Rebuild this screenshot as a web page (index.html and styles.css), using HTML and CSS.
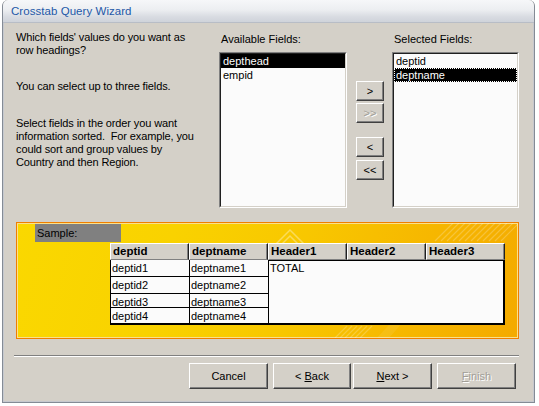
FILE: index.html
```html
<!DOCTYPE html>
<html>
<head>
<meta charset="utf-8">
<link rel="stylesheet" href="styles.css">
</head>
<body>
<div class="window">
  <div class="titlebar"><span class="title">Crosstab Query Wizard</span></div>
  <div class="content">
    <div class="top">
      <div class="intro">
        <p class="p1">Which fields' values do you want as<br>row headings?</p>
        <p class="p2">You can select up to three fields.</p>
        <p class="p3">Select fields in the order you want<br>information sorted.&nbsp; For example, you<br>could sort and group values by<br>Country and then Region.</p>
      </div>
      <div class="field-col">
        <div class="label">Available Fields:</div>
        <div class="listbox">
          <div class="list-inner">
            <div class="item sel">depthead</div>
            <div class="item">empid</div>
          </div>
        </div>
      </div>
      <div class="movers">
        <button class="btn mv">&gt;</button>
        <button class="btn mv dis mv2">&gt;&gt;</button>
        <button class="btn mv mv3">&lt;</button>
        <button class="btn mv mv4">&lt;&lt;</button>
      </div>
      <div class="field-col">
        <div class="label">Selected Fields:</div>
        <div class="listbox">
          <div class="list-inner">
            <div class="item">deptid</div>
            <div class="item sel focus">deptname</div>
          </div>
        </div>
      </div>
    </div>

    <div class="sample">
      <svg class="deco" width="501" height="115" viewBox="0 0 501 115" aria-hidden="true">
        <g fill="none" stroke="#fff" stroke-opacity="0.35" stroke-width="1.5">
          <polyline points="258,22 273,7 288,22"/>
          <polyline points="264,22 273,13 282,22"/>
        </g>
        <g stroke="#fff" stroke-opacity="0.22" stroke-width="1.2">
          <line x1="418" y1="18" x2="436" y2="0"/>
          <line x1="424" y1="18" x2="442" y2="0"/>
          <line x1="430" y1="18" x2="448" y2="0"/>
          <line x1="436" y1="18" x2="454" y2="0"/>
          <line x1="442" y1="18" x2="460" y2="0"/>
          <line x1="448" y1="18" x2="466" y2="0"/>
          <line x1="454" y1="18" x2="472" y2="0"/>
          <line x1="460" y1="18" x2="478" y2="0"/>
          <line x1="466" y1="18" x2="484" y2="0"/>
          <line x1="472" y1="18" x2="490" y2="0"/>
          <line x1="478" y1="18" x2="496" y2="0"/>
          <line x1="484" y1="18" x2="502" y2="0"/>
          <line x1="318" y1="115" x2="330" y2="103"/>
          <line x1="323" y1="115" x2="335" y2="103"/>
          <line x1="328" y1="115" x2="340" y2="103"/>
          <line x1="333" y1="115" x2="345" y2="103"/>
          <line x1="338" y1="115" x2="350" y2="103"/>
          <line x1="343" y1="115" x2="355" y2="103"/>
        </g>
        <polygon points="360,115 372,115 420,60 410,60" fill="#fff" fill-opacity="0.08"/>
      </svg>
      <div class="sample-label">Sample:</div>
      <div class="grid">
        <div class="hd">deptid</div>
        <div class="hd">deptname</div>
        <div class="hd">Header1</div>
        <div class="hd">Header2</div>
        <div class="hd">Header3</div>

        <div class="cell c1">deptid1</div>
        <div class="cell c2">deptname1</div>
        <div class="valbox">TOTAL</div>
        <div class="cell c1">deptid2</div>
        <div class="cell c2">deptname2</div>
        <div class="cell c1">deptid3</div>
        <div class="cell c2">deptname3</div>
        <div class="cell c1 last">deptid4</div>
        <div class="cell c2 last">deptname4</div>
      </div>
    </div>

    <div class="sep"></div>

    <div class="buttons">
      <button class="btn wb cancel"><span>Cancel</span></button>
      <button class="btn wb back"><span>&lt; <u>B</u>ack</span></button>
      <button class="btn wb next"><span><u>N</u>ext &gt;</span></button>
      <button class="btn wb finish dis"><span><u>F</u>inish</span></button>
    </div>
  </div>
</div>
</body>
</html>
```

FILE: styles.css
```css
* { box-sizing: border-box; }

html, body {
  margin: 0;
  padding: 0;
  background: #ffffff;
}

body {
  font-family: "Liberation Sans", Arial, sans-serif;
  font-size: 11px;
  color: #000;
}

.window {
  margin-left: 2px;
  width: 533px;
  height: 403px;
  border: 1px solid #848b95;
  border-top: none;
  border-radius: 6px 6px 0 0;
  overflow: hidden;
  display: flex;
  flex-direction: column;
  background: #d4d0c8;
}

.titlebar {
  height: 23px;
  flex: none;
  background: linear-gradient(#f6f7f9 0%, #eceef1 45%, #d9dce2 75%, #cfd3da 100%);
  border-bottom: 1px solid #b8bdc6;
  padding-left: 8px;
  display: flex;
  align-items: center;
}

.title {
  font-size: 11.5px;
  color: #2358a8;
  letter-spacing: 0.05px;
}

.content {
  flex: 1;
  padding: 0 15px 0 13px;
  box-shadow: inset 1px 0 #c6c9cf, inset -1px 0 #c6c9cf, inset 0 -1px #c6c9cf;
}

.top {
  display: grid;
  grid-template-columns: 203px 128px 45px 127px;
  padding-top: 8px;
}

.intro p {
  margin: 0;
  line-height: 13px;
  letter-spacing: -0.12px;
}
.intro .p2 { margin-top: 23px; }
.intro .p3 { margin-top: 24px; }

.label {
  margin-top: 2px;
  line-height: 13px;
  margin-bottom: 6px;
  padding-left: 2px;
}

.listbox {
  height: 156px;
  border: 1px solid;
  border-color: #808080 #ffffff #ffffff #808080;
  background: #fbfbfb;
}

.list-inner {
  height: 100%;
  border: 1px solid;
  border-color: #202020 #d4d0c8 #d4d0c8 #202020;
  padding-top: 0;
}

.item {
  height: 14px;
  line-height: 14px;
  padding-left: 2px;
  white-space: nowrap;
}

.item.sel {
  background: #000;
  color: #fff;
}

.item.focus {
  outline: 1px dotted #fff;
  outline-offset: -1px;
}

.btn {
  font-family: "Liberation Sans", Arial, sans-serif;
  font-size: 11px;
  color: #000;
  background: #d4d0c8;
  border: 1px solid;
  border-color: #ffffff #404040 #404040 #ffffff;
  box-shadow: inset -1px -1px #808080;
  padding: 0;
  margin: 0;
  display: flex;
  align-items: center;
  justify-content: center;
  white-space: pre;
}

.btn.dis {
  color: #a19e97;
  text-shadow: 1px 1px #ffffff;
}

.movers {
  display: flex;
  flex-direction: column;
  padding-left: 9px;
  padding-top: 50px;
}

.mv {
  width: 28px;
  height: 20px;
}
.mv2 { margin-top: 2px; }
.mv3 { margin-top: 14px; }
.mv4 { margin-top: 3px; }

.sample {
  position: relative;
  margin-top: 14px;
  height: 117px;
  border: 1px solid #f07f00;
  box-shadow: inset 0 0 0 1px #fbe08a;
  background: linear-gradient(105deg, #fad800 0%, #f9d200 30%, #f8c700 55%, #f6b600 80%, #f4aa00 100%);
}

.deco {
  position: absolute;
  left: 0;
  top: 0;
}

.sample-label {
  position: relative;
  margin: 1px 0 0 18px;
  width: 86px;
  height: 18px;
  line-height: 18px;
  padding-left: 2px;
  background: #808080;
  color: #000;
}

.grid {
  position: relative;
  margin: 1px 0 0 93px;
  display: grid;
  grid-template-columns: repeat(5, 79px);
  grid-template-rows: 17px 17px 17px 14px 17px;
  width: 395px;
}

.hd {
  background: #d4d0c8;
  border: 1px solid;
  border-color: #ffffff #202020 #808080 #ffffff;
  box-shadow: inset -1px 0 #808080;
  font-weight: bold;
  line-height: 15px;
  padding-left: 2px;
  font-size: 11.5px;
}

.cell {
  background: #fbfbfb;
  border-bottom: 1px solid #000;
  line-height: 16px;
  padding-left: 1px;
  white-space: nowrap;
}
.cell.c1 { border-left: 1px solid #000; }
.cell.c2 { border-left: 1px solid #000; grid-column: 2; }
.cell.last { border-bottom: 2px solid #000; }

.valbox {
  grid-column: 3 / 6;
  grid-row: 2 / 6;
  background: #fbfbfb;
  border: 1px solid #000;
  border-right-width: 2px;
  border-bottom-width: 2px;
  padding-left: 1px;
  line-height: 14px;
}

.sep {
  margin: 16px 0 0 -2px;
  width: 505px;
  height: 2px;
  border-top: 1px solid #808080;
  border-bottom: 1px solid #ffffff;
}

.buttons {
  display: flex;
  justify-content: flex-end;
  margin-top: 6px;
  padding-right: 3px;
}

.wb {
  width: 79px;
  height: 26px;
}
.cancel { margin-right: 5px; }
.back { width: 78px; margin-right: 2px; }
.next { margin-right: 5px; }
```
